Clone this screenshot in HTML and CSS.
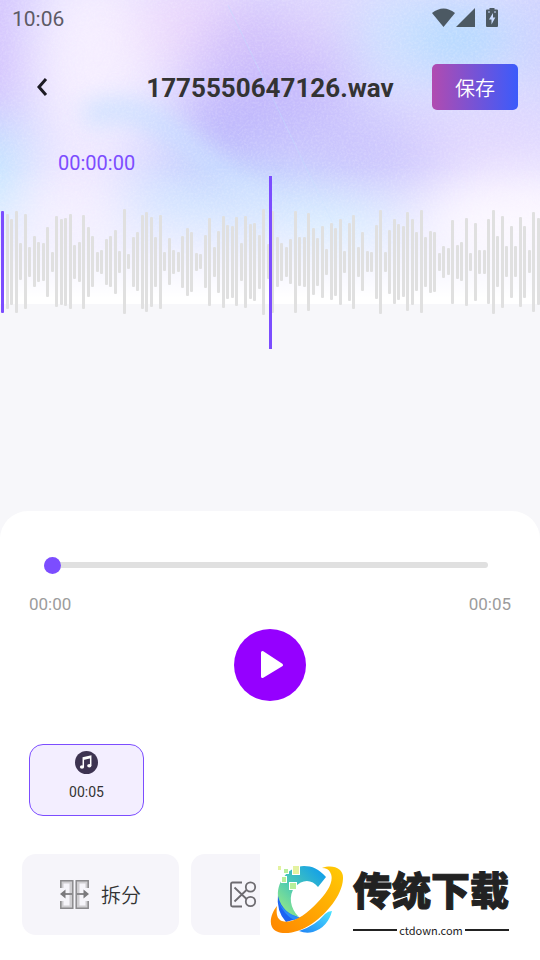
FILE: index.html
```
<!DOCTYPE html>
<html lang="zh-CN">
<head>
  <meta charset="UTF-8" />
  <meta name="viewport" content="width=device-width, initial-scale=1" />
  <title>1775550647126.wav</title>
  <link rel="stylesheet" href="styles.css">
</head>
<body>
  <svg class="backdrop" viewBox="0 0 540 304" preserveAspectRatio="none" aria-hidden="true">
    <defs>
      <filter id="soft" x="-50%" y="-50%" width="200%" height="200%" color-interpolation-filters="sRGB">
        <feGaussianBlur stdDeviation="26" />
      </filter>
      <filter id="soft-small" x="-50%" y="-50%" width="200%" height="200%" color-interpolation-filters="sRGB">
        <feGaussianBlur stdDeviation="11" />
      </filter>
      <filter id="grain" x="0" y="0" width="100%" height="100%">
        <feTurbulence type="fractalNoise" baseFrequency=".45" numOctaves="2" />
        <feColorMatrix values="0 0 0 0 1  0 0 0 0 1  0 0 0 0 1  .9 0 0 0 -.35" />
      </filter>
      <linearGradient id="fade" x1="0" y1="0" x2="0" y2="1">
        <stop offset=".55" stop-color="#fff" stop-opacity="0" />
        <stop offset=".8" stop-color="#fff" stop-opacity=".5" />
        <stop offset=".98" stop-color="#fff" />
      </linearGradient>
    </defs>
    <rect width="540" height="304" fill="#dfdcff" />
    <g filter="url(#soft)">
      <rect x="-60" y="-60" width="80" height="180" fill="#d2c2fd" />
      <rect x="-60" y="125" width="80" height="110" fill="#bfe4ff" />
      <ellipse cx="95" cy="60" rx="60" ry="95" fill="#f5eeff" />
      <ellipse cx="195" cy="25" rx="60" ry="50" fill="#ecd9fc" />
      <ellipse cx="275" cy="65" rx="80" ry="65" fill="#d0bffb" />
      <ellipse cx="275" cy="130" rx="100" ry="45" fill="#bcb5fc" />
      <ellipse cx="360" cy="150" rx="120" ry="40" fill="#cbc5fd" />
      <ellipse cx="230" cy="205" rx="110" ry="35" fill="#c3ddff" />
      <ellipse cx="330" cy="15" rx="50" ry="30" fill="#dfd5fd" />
      <ellipse cx="400" cy="35" rx="50" ry="45" fill="#cde0ff" />
      <ellipse cx="465" cy="40" rx="50" ry="32" fill="#add9ff" />
      <rect x="525" y="-30" width="80" height="120" fill="#cbd0fe" />
      <ellipse cx="490" cy="140" rx="80" ry="30" fill="#dfd5fe" />
      <ellipse cx="520" cy="220" rx="100" ry="50" fill="#faf4ff" />
      <ellipse cx="340" cy="225" rx="60" ry="25" fill="#c3e8ff" />
      <ellipse cx="70" cy="205" rx="60" ry="50" fill="#f0e9ff" />
    </g>
    <path d="M85 118Q130 95 180 138T270 205" fill="none" stroke="#c9dfff" stroke-width="26" stroke-opacity=".8" filter="url(#soft-small)" />
    <path d="M228 5L335 228" fill="none" stroke="#bfdcff" stroke-opacity=".5" />
    <rect width="540" height="304" filter="url(#grain)" opacity=".4" />
    <rect width="540" height="304" fill="url(#fade)" />
  </svg>

  <div class="status-bar">
    <span>10:06</span>
    <div class="status-icons">
      <svg width="24" height="20" viewBox="0 0 24 20" aria-hidden="true">
        <path d="M0 5Q11.500-4 23 5L11.500 19z" />
      </svg>
      <svg width="20" height="20" viewBox="0 0 20 20" aria-hidden="true">
        <path d="M19 0V19H0z" />
      </svg>
      <svg class="battery" width="12" height="20" viewBox="0 0 12 20" aria-hidden="true">
        <path fill-rule="evenodd" d="M3.500 0h5v1.500H11q1 0 1 1V18q0 1-1 1H1q-1 0-1-1V2.500q0-1 1-1h2.500zM2 3.500v1h2v-1zM8 3.500v1h2v-1zM7 5L3 11.500h2.500v5L9.300 9.500H7z" />
      </svg>
    </div>
  </div>

  <header>
    <button class="back" aria-label="返回">
      <svg width="14" height="20" viewBox="0 0 14 20" aria-hidden="true">
        <path d="M11 2L4 10l7 8" />
      </svg>
    </button>
    <h1>1775550647126.wav</h1>
    <button class="save">保存</button>
  </header>

  <section class="editor">
    <div class="timecode">00:00:00</div>
    <div class="stage">
      <div class="waveform" id="waveform"></div>
      <div class="playhead"></div>
    </div>
  </section>

  <main>
    <input class="seek" type="range" min="0" max="5" value="0" aria-label="播放进度" />
    <div class="times">
      <span>00:00</span>
      <span>00:05</span>
    </div>

    <button class="play" aria-label="播放">
      <svg width="72" height="72" viewBox="0 0 72 72" aria-hidden="true">
        <path d="M28.500 23.500v24L47.500 36z" />
      </svg>
    </button>

    <div class="clips">
      <button class="clip">
        <svg width="23" height="23" viewBox="0 0 23 23" aria-hidden="true">
          <circle cx="11.500" cy="11.500" r="11.500" fill="#3d3351" />
          <path d="M8.300 16V6.800l7.400-1.600v9.600M8.300 8.200l7.400-1.600" fill="none" stroke="#fff" stroke-width="1.500" />
          <ellipse cx="7" cy="16" rx="2.100" ry="1.800" fill="#fff" />
          <ellipse cx="14.300" cy="14.800" rx="2.100" ry="1.800" fill="#fff" />
        </svg>
        <span>00:05</span>
      </button>
    </div>

    <div class="tools">
      <button class="tool">
        <svg width="29" height="29" viewBox="0 0 29 29" aria-hidden="true">
          <g fill="none" stroke="#cfced1" stroke-width="3">
            <path d="M2 8V2h9v25H2v-6M27 8V2h-9v25h9v-6" />
          </g>
          <g fill="none" stroke="#8b8a8d" stroke-width="1.500">
            <path d="M.8 8V.8h12v27.500H.8V21M28.200 8V.8h-12v27.500h12V21" />
          </g>
          <path d="M4 14h8M17 14h8" stroke="#8b8a8d" stroke-width="2" />
          <path d="M0 14l5.500-4.500v9zM29 14l-5.500-4.500v9z" fill="#7b7a7d" />
        </svg>
        <span>拆分</span>
      </button>
      <button class="tool" aria-label="剪切">
        <svg width="28" height="27" viewBox="0 0 28 27" aria-hidden="true">
          <g fill="none" stroke="#6d6b70" stroke-width="1.800">
            <path d="M13 1.500H3.500q-1.500 0-1.500 1.500v21q0 1.500 1.500 1.500H13M5.500 6.500l12 11.500M5.500 20.500L17.500 9" />
            <circle cx="21.500" cy="6" r="4.700" />
            <circle cx="21.500" cy="20.500" r="4.700" />
          </g>
        </svg>
      </button>
    </div>
  </main>

  <div class="brand">
    <svg width="74" height="72" viewBox="0 0 74 72" aria-hidden="true">
      <defs>
        <linearGradient id="arc" x1="1" y1="0" x2="0" y2="1">
          <stop offset="0" stop-color="#0797f4" />
          <stop offset=".55" stop-color="#4bc9b4" />
          <stop offset="1" stop-color="#a4ef7d" />
        </linearGradient>
        <linearGradient id="ring" x1="1" y1="0" x2="0" y2="1">
          <stop offset="0" stop-color="#ffcb05" />
          <stop offset="1" stop-color="#ff8500" />
        </linearGradient>
        <linearGradient id="tail" x1="1" y1="0" x2="0" y2="1">
          <stop offset="0" stop-color="#4be5ff" />
          <stop offset="1" stop-color="#1f82f5" />
        </linearGradient>
      </defs>
      <path d="M8 29Q6 46 16 57L30 53Q14 45 8 29z" fill="#1d63f2" />
      <path d="M8 36Q14 50 24 55L30 53Q15 49 8 36z" fill="#2b8df8" />
      <path d="M56 12C49 4 42 1 34 1C20 1 7 15 8 31C11 44 20 50 29 52C20 44 18 30 25 22C32 14 42 14 48 22z" fill="url(#arc)" />
      <path d="M62 46Q58 62 43 67Q36 69 29 66Q45 61 55 49Q58 46 62 46z" fill="url(#tail)" />
      <path d="M52 3C64-1 74 4 73 14C72 31 56 49 43 58C28 69 7 72 2 62C-1 56 2 47 7 41C6 49 7 54 12 56C22 60 38 48 47 38C58 27 65 15 60 7Q58 3 52 3z" fill="url(#ring)" />
      <g stroke="#fff" stroke-width="2" paint-order="stroke">
        <path d="M23 1h6v8h-6zM8 1h3v4H8z" fill="#e4f2a0" />
        <path d="M14 4h4v4h-4zM12 12h4v5h-4zM20 18h6v6h-6z" fill="#b7ef9a" />
      </g>
    </svg>
    <div class="brand-text">
      <strong>传统下载</strong>
      <div class="brand-site">ctdown.com</div>
    </div>
  </div>

  <script>
    // Pegel der Aufnahme
    const levels = [
      102, 95, 86, 102, 37, 95, 30, 51, 40, 38, 70, 20, 91, 86, 88, 95, 34, 40, 94, 70,
      51, 20, 24, 46, 51, 64, 22, 105, 15, 50, 59, 94, 100, 90, 50, 94, 19, 47, 24, 20,
      52, 68, 60, 18, 15, 53, 88, 30, 62, 92, 74, 72, 89, 38, 92, 75, 78, 54, 106, 35,
      102, 50, 38, 30, 45, 102, 49, 50, 98, 67, 48, 72, 26, 77, 68, 86, 22, 78, 94, 30,
      59, 21, 20, 74, 104, 20, 64, 85, 76, 71, 99, 86, 59, 103, 50, 62, 60, 18, 32, 27,
      84, 34, 39, 88, 18, 78, 24, 24, 85, 104, 51, 92, 31, 72, 31, 90, 72, 23, 100, 87
    ];
    const waveform = document.getElementById('waveform');

    levels.forEach((level, i) => {
      const bar = document.createElement('span');
      bar.style.height = level + 'px';
      if (i === 0) bar.classList.add('played');
      waveform.appendChild(bar);
    });
  </script>
</body>
</html>
```
FILE: styles.css
```
:root {
  --color-accent: #7c4dff;
  --color-bg: #f7f7fa;
  --color-text: #333;
  --color-muted: #9c9c9c;
}

* {
  box-sizing: border-box;
}

body {
  margin: 0;
  min-height: 100vh;
  position: relative;
  z-index: 0;
  display: flex;
  flex-direction: column;
  overflow-x: hidden;
  font-family: Roboto, "Noto Sans CJK SC", sans-serif;
  color: var(--color-text);
  background-color: var(--color-bg);
}

button {
  border: none;
  padding: 0;
  background: none;
  font: inherit;
  color: inherit;
  cursor: pointer;
}

svg {
  display: block;
  flex-shrink: 0;
}

.backdrop {
  position: absolute;
  top: 0;
  left: 0;
  z-index: -1;
  width: 100%;
  height: 304px;
}

/* Status Bar */
.status-bar {
  height: 36px;
  padding: 0 42px 0 12px;
  display: flex;
  align-items: center;
  justify-content: space-between;
  font-size: 21px;
  font-weight: 450;
  line-height: 24px;
  color: #5d5a66;
}

.status-bar > span {
  padding-top: 2px;
}

.status-icons {
  display: flex;
  fill: #4c5963;
}

.status-icons .battery {
  margin-left: 10px;
}

/* Header */
header {
  margin-top: 28px;
  padding: 0 22px;
  display: grid;
  grid-template-columns: 1fr auto 1fr;
  align-items: center;
}

header h1 {
  margin: 0;
  padding-top: 2px;
  font-size: 26px;
  font-weight: 700;
}

.back {
  width: 40px;
  height: 46px;
  display: flex;
  align-items: center;
  justify-content: center;
}

.back path {
  fill: none;
  stroke: #1d1b24;
  stroke-width: 3;
}

.save {
  width: 86px;
  height: 46px;
  justify-self: end;
  border-radius: 5px;
  background: linear-gradient(to right, #b14bb0, #3b5bfb);
  color: #fff;
  font-family: "Noto Sans CJK SC DemiLight", "Noto Sans CJK SC", sans-serif;
  font-size: 20px;
  font-weight: 350;
}

/* Waveform */
.timecode {
  margin: 41px 58px 1px;
  font-size: 20px;
  line-height: 24px;
  color: var(--color-accent);
}

.stage {
  position: relative;
  height: 173px;
  margin-bottom: 162px;
}

.waveform {
  height: 171px;
  padding-left: 1px;
  display: flex;
  align-items: center;
  justify-content: space-between;
}

.waveform span {
  width: 3px;
  border-radius: 1px;
  background-color: #e0e0e0;
}

.waveform .played {
  background-color: var(--color-accent);
}

.playhead {
  position: absolute;
  top: 0;
  bottom: 0;
  left: calc(50% - 1px);
  width: 3px;
  background-color: var(--color-accent);
}

/* Player */
main {
  flex: 1;
  padding: 45px 29px 25px;
  display: flex;
  flex-direction: column;
  border-radius: 28px 28px 0 0;
  background-color: #fff;
}

.seek {
  -webkit-appearance: none;
  appearance: none;
  height: 17px;
  margin: 0 23px 0 15px;
  background: none;
}

.seek::-webkit-slider-runnable-track {
  height: 6px;
  border-radius: 3px;
  background-color: #e0e0e0;
}

.seek::-webkit-slider-thumb {
  -webkit-appearance: none;
  width: 17px;
  height: 17px;
  margin-top: -5px;
  border-radius: 50%;
  background-color: var(--color-accent);
}

.times {
  margin-top: 21px;
  display: flex;
  justify-content: space-between;
  font-size: 17px;
  line-height: 20px;
  color: var(--color-muted);
}

.play {
  margin-top: 15px;
  align-self: center;
  border-radius: 50%;
  background-color: #9500ff;
}

.play path {
  fill: #fff;
  stroke: #fff;
  stroke-width: 3;
  stroke-linejoin: round;
}

.clips {
  margin-top: 43px;
  display: flex;
}

.clip {
  width: 115px;
  height: 72px;
  padding-top: 6px;
  display: flex;
  flex-direction: column;
  align-items: center;
  gap: 10px;
  border: 1px solid var(--color-accent);
  border-radius: 14px;
  background-color: #f3eeff;
  font-size: 14px;
  line-height: 16px;
}

/* Tools */
.tools {
  margin: 38px -7px 0;
  display: flex;
  gap: 12px;
  overflow: hidden;
}

.tool {
  min-width: 157px;
  height: 81px;
  padding: 0 38px;
  display: flex;
  align-items: center;
  gap: 12px;
  border-radius: 14px;
  background-color: #f6f5fa;
  font-family: "Noto Sans CJK SC DemiLight", "Noto Sans CJK SC", sans-serif;
  font-size: 20px;
  font-weight: 350;
}

/* Logo unten rechts */
.brand {
  position: absolute;
  right: 0;
  bottom: 10px;
  width: 280px;
  height: 100px;
  padding: 5px 10px 0;
  display: flex;
  gap: 9px;
  background-color: #fff;
  color: #222;
}

.brand svg {
  margin-top: 10px;
}

.brand-text {
  width: 156px;
  text-align: center;
}

.brand strong {
  display: block;
  font-family: "Noto Sans CJK SC", sans-serif;
  font-size: 39px;
  font-weight: 900;
  line-height: 66px;
  white-space: nowrap;
  -webkit-text-stroke: 1px #222;
}

.brand-site {
  display: flex;
  align-items: center;
  gap: 2px;
  font-family: "Noto Sans CJK SC", sans-serif;
  font-size: 11px;
  line-height: 18px;
}

.brand-site::before,
.brand-site::after {
  content: "";
  flex: 1;
  height: 2px;
  background-color: #222;
}
```
